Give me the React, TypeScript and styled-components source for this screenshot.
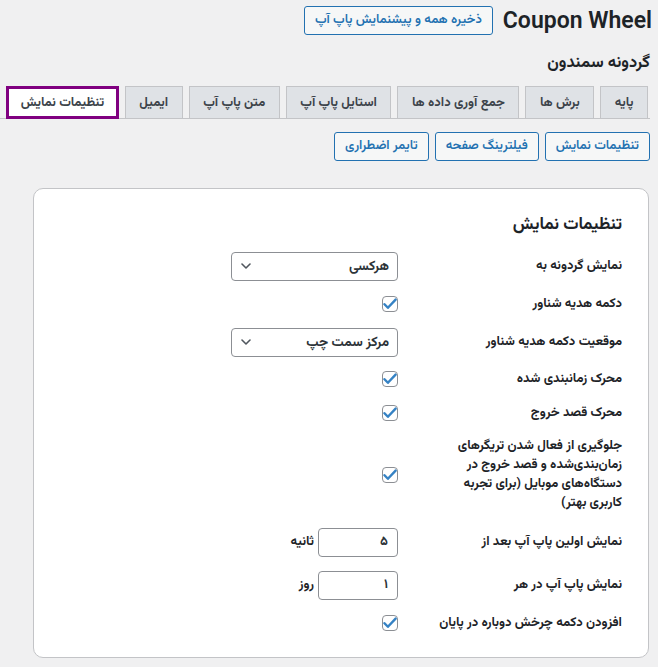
import React from "react";
import styled, { createGlobalStyle } from "styled-components";

const Global = createGlobalStyle`
  html, body { margin: 0; padding: 0; background: #f0f0f1; }
  body { font-family: "Vazirmatn", "Noto Sans Arabic", "DejaVu Sans", sans-serif; color: #1d2327; }
  * { box-sizing: border-box; }
`;

const Page = styled.div`
  direction: rtl;
  padding: 6px 8px 0 0;
  min-height: 667px;
`;

const Header = styled.div`
  display: flex;
  align-items: center;
  gap: 10px;
  height: 29px;
`;

const Title = styled.h1`
  margin: 0;
  font-family: Roboto, "Liberation Sans", sans-serif;
  font-size: 23px;
  font-weight: 600;
  color: #1d2327;
  line-height: 29px;
  direction: ltr;
  margin-right: -2px;
`;

const WPButton = styled.button`
  height: 29px;
  padding: 0 10px;
  border: 1px solid #2271b1;
  border-radius: 3px;
  background: #f6f7f7;
  color: #2271b1;
  font-family: inherit;
  font-size: 13px;
  font-weight: 600;
  line-height: 27px;
  white-space: nowrap;
  cursor: pointer;
`;

const Subtitle = styled.h2`
  margin: 18px 0 0;
  font-size: 16.5px;
  font-weight: 700;
  line-height: 20px;
  color: #1d2327;
`;

const TabBar = styled.div`
  display: flex;
  gap: 6px;
  margin-top: 13px;
  padding-right: 2px;
  border-bottom: 1px solid #c3c4c7;
  height: 33px;
  overflow: visible;
`;

const Tab = styled.div<{ $active?: boolean }>`
  height: 33px;
  padding: 0 ${(p) => (p.$active ? "11.5px" : "13.5px")};
  display: flex;
  align-items: center;
  font-size: 13px;
  font-weight: 700;
  color: #3c434a;
  white-space: nowrap;
  background: ${(p) => (p.$active ? "#ffffff" : "#dfe2e6")};
  border: ${(p) => (p.$active ? "3px solid #800080" : "1px solid #c3c4c7")};
  ${(p) => (p.$active ? "" : "border-bottom: none; height: 32px;")}
`;

const SubNav = styled.div`
  display: flex;
  gap: 6px;
  margin-top: 13px;
`;

const Panel = styled.div`
  margin: 27px 1px 0 33px;
  background: #fff;
  border: 1px solid #c3c4c7;
  border-radius: 10px;
  padding: 18px 26px 20px;
  height: 470px;
`;

const PanelTitle = styled.h3`
  margin: 0 0 4px;
  font-size: 17px;
  font-weight: 700;
  line-height: 36px;
  color: #1d2327;
`;

const Row = styled.div<{ $h: number }>`
  display: grid;
  grid-template-columns: 212px auto;
  column-gap: 12px;
  align-items: center;
  justify-content: start;
  height: ${(p) => p.$h}px;
`;

const Label = styled.div`
  font-size: 13px;
  font-weight: 700;
  line-height: 19px;
  color: #1d2327;
  max-width: 190px;
`;

const Control = styled.div`
  display: flex;
  align-items: center;
  gap: 4px;
`;

const SelectBox = styled.div`
  width: 167px;
  height: 29px;
  border: 1px solid #8c8f94;
  border-radius: 4px;
  background: #fff;
  display: flex;
  align-items: center;
  justify-content: space-between;
  padding: 0 8px 0 9px;
  font-size: 13.5px;
  font-weight: 700;
  color: #2c3338;
`;

const NumInput = styled.div`
  width: 80px;
  height: 29px;
  border: 1px solid #8c8f94;
  border-radius: 4px;
  background: #fff;
  display: flex;
  align-items: center;
  padding: 0 9px;
  font-size: 13px;
  font-weight: 700;
  color: #2c3338;
`;

const Suffix = styled.span`
  font-size: 13px;
  font-weight: 700;
  color: #1d2327;
`;

const Check = styled.span`
  width: 16px;
  height: 16px;
  border: 1px solid #8c8f94;
  border-radius: 4px;
  background: #fff;
  display: inline-flex;
  align-items: center;
  justify-content: center;
`;

const Chevron = () => (
  <svg width="10" height="6" viewBox="0 0 10 6" fill="none">
    <path d="M1 1l4 4 4-4" stroke="#50575e" strokeWidth="1.6" strokeLinecap="round" strokeLinejoin="round" />
  </svg>
);

const Checkbox = () => (
  <Check>
    <svg width="14" height="12" viewBox="0 0 14 12">
      <path d="M1.5 6.2l3.4 3.6L12.6 1.6" fill="none" stroke="#3582c4" strokeWidth="2.4" strokeLinecap="round" strokeLinejoin="round" />
    </svg>
  </Check>
);

const Select = ({ value }: { value: string }) => (
  <SelectBox>
    <span>{value}</span>
    <Chevron />
  </SelectBox>
);

const tabs = ["پایه", "برش ها", "جمع آوری داده ها", "استایل پاپ آپ", "متن پاپ آپ", "ایمیل", "تنظیمات نمایش"];

export default function App() {
  return (
    <>
      <Global />
      <Page>
        <Header>
          <Title>Coupon Wheel</Title>
          <WPButton>ذخیره همه و پیشنمایش پاپ آپ</WPButton>
        </Header>
        <Subtitle>گردونه سمندون</Subtitle>
        <TabBar>
          {tabs.map((t, i) => (
            <Tab key={t} $active={i === tabs.length - 1}>
              {t}
            </Tab>
          ))}
        </TabBar>
        <SubNav>
          <WPButton>تنظیمات نمایش</WPButton>
          <WPButton>فیلترینگ صفحه</WPButton>
          <WPButton>تایمر اضطراری</WPButton>
        </SubNav>
        <Panel>
          <PanelTitle>تنظیمات نمایش</PanelTitle>
          <Row $h={38}>
            <Label>نمایش گردونه به</Label>
            <Control><Select value="هرکسی" /></Control>
          </Row>
          <Row $h={38}>
            <Label>دکمه هدیه شناور</Label>
            <Control><Checkbox /></Control>
          </Row>
          <Row $h={38}>
            <Label>موقعیت دکمه هدیه شناور</Label>
            <Control><Select value="مرکز سمت چپ" /></Control>
          </Row>
          <Row $h={36}>
            <Label>محرک زمانبندی شده</Label>
            <Control><Checkbox /></Control>
          </Row>
          <Row $h={32}>
            <Label>محرک قصد خروج</Label>
            <Control><Checkbox /></Control>
          </Row>
          <Row $h={92}>
            <Label>جلوگیری از فعال شدن تریگرهای زمان‌بندی‌شده و قصد خروج در دستگاه‌های موبایل (برای تجربه کاربری بهتر)</Label>
            <Control><Checkbox /></Control>
          </Row>
          <Row $h={42}>
            <Label>نمایش اولین پاپ آپ بعد از</Label>
            <Control><NumInput>۵</NumInput><Suffix>ثانیه</Suffix></Control>
          </Row>
          <Row $h={44}>
            <Label>نمایش پاپ آپ در هر</Label>
            <Control><NumInput>۱</NumInput><Suffix>روز</Suffix></Control>
          </Row>
          <Row $h={32}>
            <Label>افزودن دکمه چرخش دوباره در پایان</Label>
            <Control><Checkbox /></Control>
          </Row>
        </Panel>
      </Page>
    </>
  );
}
